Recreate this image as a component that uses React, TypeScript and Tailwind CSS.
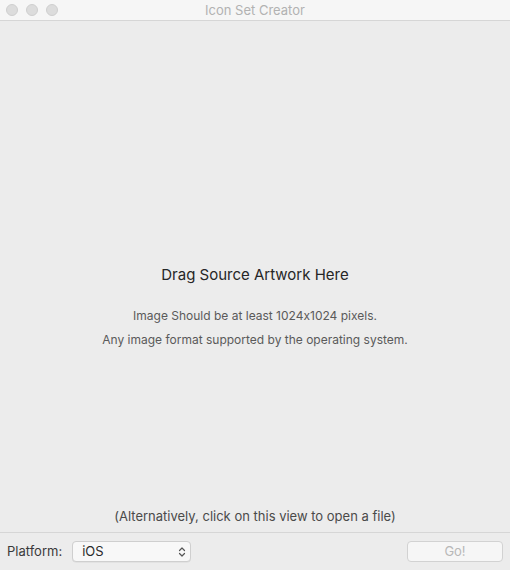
import React from 'react';

const App: React.FC = () => {
  return (
    <div className="w-[510px] h-[570px] flex flex-col bg-[#ececec] overflow-hidden font-['Inter','Liberation_Sans',sans-serif] [font-feature-settings:'calt'_0] select-none">
      {/* Title bar */}
      <div className="h-[21px] flex-shrink-0 relative flex items-center justify-center bg-[#f6f6f6] border-b border-[#d6d6d6]">
        <div className="absolute left-[6px] top-[4px] flex gap-[8px]">
          <span className="w-[12px] h-[12px] rounded-full bg-[#dcdcdc] border border-[#cfcfcf]" />
          <span className="w-[12px] h-[12px] rounded-full bg-[#dcdcdc] border border-[#cfcfcf]" />
          <span className="w-[12px] h-[12px] rounded-full bg-[#dcdcdc] border border-[#cfcfcf]" />
        </div>
        <span className="text-[13px] text-[#b2b2b2] leading-none">Icon Set Creator</span>
      </div>

      {/* Drop area */}
      <div className="flex-1 flex flex-col items-center pt-[244px] pb-[8px]">
        <p className="text-[15px] leading-[20px] text-[#262626]">Drag Source Artwork Here</p>
        <div className="mt-[19px] flex flex-col items-center text-[12px] leading-[24px] text-[#5a5a5a]">
          <p>Image Should be at least 1024x1024 pixels.</p>
          <p>Any image format supported by the operating system.</p>
        </div>
        <p className="mt-auto text-[13px] leading-[16px] text-[#4a4a4a]">(Alternatively, click on this view to open a file)</p>
      </div>

      {/* Bottom bar */}
      <div className="h-[38px] flex-shrink-0 border-t border-[#d6d6d6] flex items-center px-[7px]">
        <span className="text-[13px] text-[#3a3a3a] mr-[10px]">Platform:</span>
        <div className="w-[119px] h-[21px] rounded-[4px] bg-[#f8f8f8] border border-[#cfcfcf] flex items-center justify-between pl-[9px] pr-[4px] shadow-[0_0.5px_0_rgba(0,0,0,0.08)]">
          <span className="text-[13px] text-[#2a2a2a]">iOS</span>
          <svg width="8" height="12" viewBox="0 0 8 12" fill="none" stroke="#555" strokeWidth="1.2" strokeLinecap="round" strokeLinejoin="round">
            <path d="M1.5 4.5 L4 2 L6.5 4.5" />
            <path d="M1.5 7.5 L4 10 L6.5 7.5" />
          </svg>
        </div>
        <div className="ml-auto w-[96px] h-[21px] rounded-[4px] bg-[#f6f6f6] border border-[#d2d2d2] flex items-center justify-center">
          <span className="text-[13px] text-[#b8b8b8]">Go!</span>
        </div>
      </div>
    </div>
  );
};

export default App;
